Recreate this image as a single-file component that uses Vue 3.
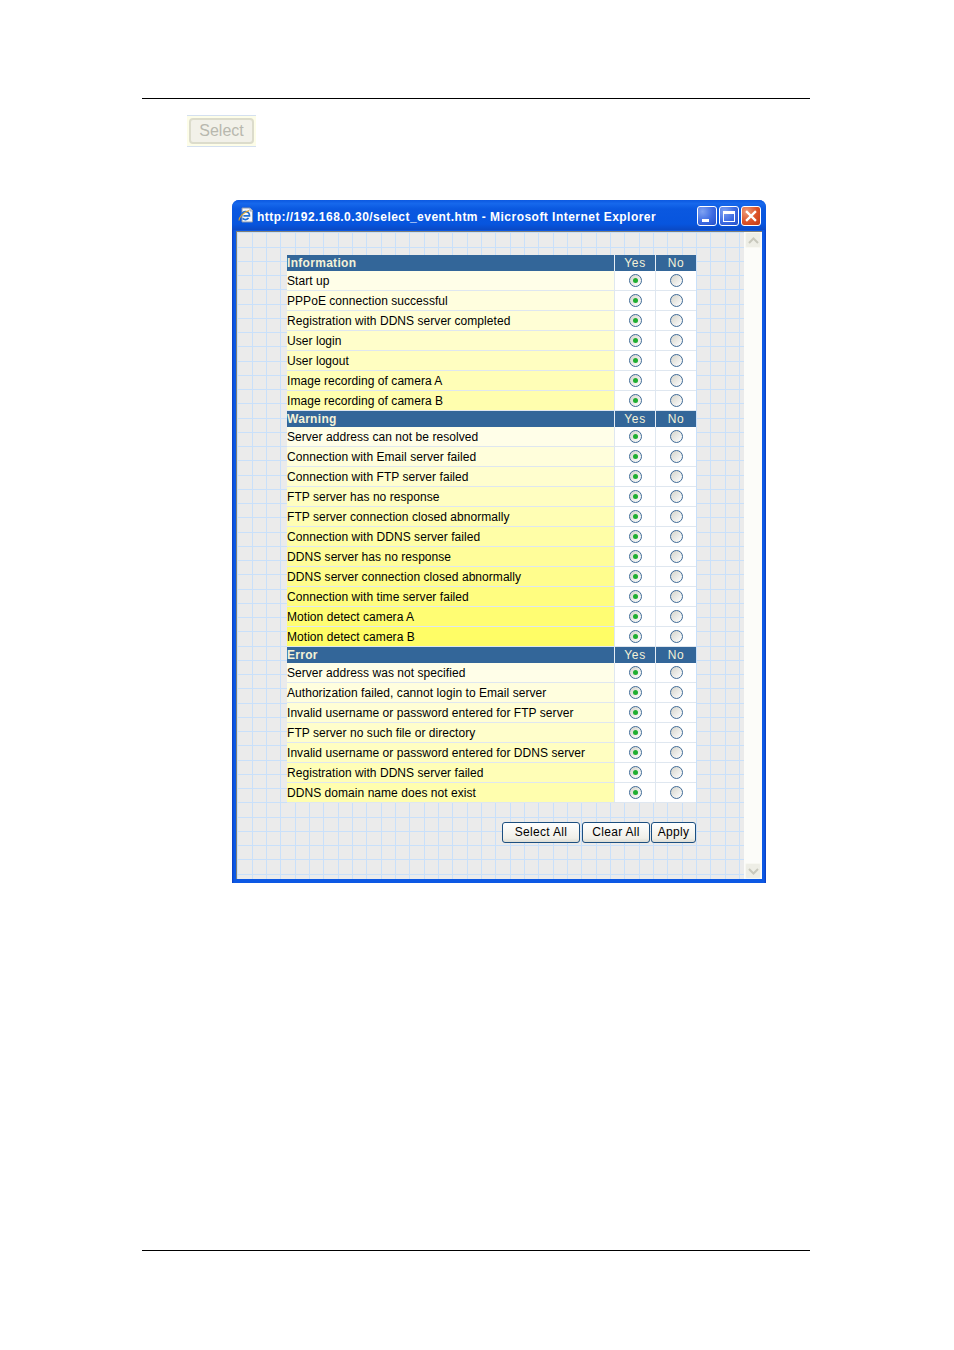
<script setup>
const sections = [
  { title: 'Information', rows: ['Start up', 'PPPoE connection successful', 'Registration with DDNS server completed', 'User login', 'User logout', 'Image recording of camera A', 'Image recording of camera B'] },
  { title: 'Warning', rows: ['Server address can not be resolved', 'Connection with Email server failed', 'Connection with FTP server failed', 'FTP server has no response', 'FTP server connection closed abnormally', 'Connection with DDNS server failed', 'DDNS server has no response', 'DDNS server connection closed abnormally', 'Connection with time server failed', 'Motion detect camera A', 'Motion detect camera B'] },
  { title: 'Error', rows: ['Server address was not specified', 'Authorization failed, cannot login to Email server', 'Invalid username or password entered for FTP server', 'FTP server no such file or directory', 'Invalid username or password entered for DDNS server', 'Registration with DDNS server failed', 'DDNS domain name does not exist'] }
]
function shade(i) {
  const t = Math.min(i / 10, 1)
  const b = Math.round(232 - t * 130)
  return { background: `rgb(255,${Math.round(254 - t)},${b})` }
}
</script>

<template>
  <div class="page">
    <hr class="rule" />
    <div class="select-wrap"><button class="select-btn" disabled>Select</button></div>

    <div class="window">
      <div class="titlebar">
        <svg class="ie" viewBox="0 0 16 16" width="16" height="16">
          <path d="M4 1h8l2.5 2.5V15H4z" fill="#f6f8fb" stroke="#8a97ad" stroke-width="1" />
          <path d="M12 1v3h2.5" fill="#dfe5ee" stroke="#8a97ad" stroke-width="0.8" />
          <path d="M3.6 9.4a4 4 0 1 1 7.9 -.6H5.4M10.6 11A4 4 0 0 1 4.6 11.4" fill="none" stroke="#2170d4" stroke-width="1.7" />
          <path d="M1 13.5C1 10.5 5.5 5 11 3.6" fill="none" stroke="#d9a22e" stroke-width="1.1" />
        </svg>
        <span class="title-text">http://192.168.0.30/select_event.htm - Microsoft Internet Explorer</span>
        <div class="controls">
          <span class="ctl"><i class="min"></i></span>
          <span class="ctl"><i class="max"></i></span>
          <span class="ctl close">
            <svg viewBox="0 0 11 11" width="12" height="12"><path d="M1 1l9 9M10 1l-9 9" stroke="#fff" stroke-width="2.1" /></svg>
          </span>
        </div>
      </div>

      <div class="client">
        <div class="content">
          <div class="events">
            <template v-for="s in sections" :key="s.title">
              <div class="row head">
                <div class="cell label">{{ s.title }}</div>
                <div class="cell choice">Yes</div>
                <div class="cell choice">No</div>
              </div>
              <div v-for="(r, i) in s.rows" :key="r" class="row">
                <div class="cell label" :style="shade(s.rows.length === 7 ? i * 0.75 : i)">{{ r }}</div>
                <div class="cell choice"><span class="radio on"></span></div>
                <div class="cell choice"><span class="radio"></span></div>
              </div>
            </template>
          </div>
          <div class="actions">
            <button class="btn b1">Select All</button>
            <button class="btn b2">Clear All</button>
            <button class="btn b3">Apply</button>
          </div>
        </div>
        <div class="scrollbar">
          <span class="arrow">
            <svg viewBox="0 0 11 7" width="11" height="7"><path d="M1 6l4.5-4.5L10 6" fill="none" stroke="#c8c8bc" stroke-width="2" /></svg>
          </span>
          <span class="arrow">
            <svg viewBox="0 0 11 7" width="11" height="7"><path d="M1 1l4.5 4.5L10 1" fill="none" stroke="#c8c8bc" stroke-width="2" /></svg>
          </span>
        </div>
      </div>
    </div>

    <hr class="rule bottom" />
  </div>
</template>

<style>
html, body { margin: 0; background: #fff; }
</style>

<style scoped>
.page {
  width: 954px;
  height: 1350px;
  box-sizing: border-box;
  padding-top: 98px;
  font-family: "Liberation Sans", Arial, sans-serif;
  overflow: hidden;
}
.rule {
  width: 668px;
  height: 1px;
  margin: 0 0 0 142px;
  border: 0;
  background: #000;
}
.rule.bottom { margin-top: 367px; }
.select-wrap {
  width: 69px;
  height: 32px;
  margin: 16px 0 0 187px;
  box-sizing: border-box;
  padding: 2px;
  background: #fdfde8;
  border-top: 1px solid #d4e0f0;
  border-bottom: 1px solid #d4e0f0;
  display: flex;
}
.select-btn {
  flex: 1;
  padding: 0;
  font: 16px "Liberation Sans", Arial, sans-serif;
  color: #b8b8ae;
  background: #f2f1e9;
  border: 2px solid #dcdccc;
  border-radius: 4px;
}
.window {
  width: 534px;
  height: 683px;
  box-sizing: border-box;
  margin: 53px 0 0 232px;
  background: linear-gradient(90deg, #0a3cc0, #0c58e4 2px, #0c58e4 calc(100% - 2px), #0a3cc0);
  border-radius: 7px 7px 0 0;
  padding: 0 4px 4px 4px;
  display: flex;
  flex-direction: column;
}
.titlebar {
  height: 30px;
  flex: none;
  display: flex;
  align-items: center;
  margin: 0 -4px;
  padding: 0 5px 0 6px;
  border-radius: 7px 7px 0 0;
  background: linear-gradient(#0c58e0 0, #1668ec 12%, #0a58e0 30%, #0755de 80%, #0a49c4 100%);
}
.ie { flex: none; margin-right: 3px; }
.title-text {
  flex: 1;
  color: #fff;
  font-size: 12px;
  font-weight: 700;
  letter-spacing: 0.47px;
  white-space: nowrap;
  padding-top: 3px;
}
.controls { display: flex; gap: 2px; margin-top: 2px; }
.ctl {
  width: 20px;
  height: 20px;
  box-sizing: border-box;
  border: 1px solid #fff;
  border-radius: 3px;
  background: radial-gradient(circle at 25% 25%, #7fa2f2, #3c6ae2 55%, #2450c8);
  position: relative;
  display: flex;
  align-items: center;
  justify-content: center;
}
.ctl.close { background: radial-gradient(circle at 25% 25%, #ee9a78, #dc5228 55%, #c23a14); }
.min {
  position: absolute;
  left: 4px;
  bottom: 3px;
  width: 7px;
  height: 3px;
  background: #fff;
}
.max {
  width: 12px;
  height: 11px;
  box-sizing: border-box;
  border: 1px solid #fff;
  border-top-width: 3px;
}
.client {
  flex: 1;
  display: flex;
  min-height: 0;
  margin-top: 1px;
  border-top: 1px solid #808078;
  border-left: 1px solid #808078;
}
.content {
  width: 507px;
  flex: none;
  box-sizing: border-box;
  padding: 23px 0 0 49px;
  background-color: #ebebeb;
  background-image:
    linear-gradient(#c9e0fa 0 1px, transparent 1px 15px, #c9e0fa 15px 16px, transparent 16px 29px, #c9e0fa 29px 30px, transparent 30px 43px, #c9e0fa 43px 44px, transparent 44px),
    linear-gradient(90deg, #c9e0fa 0 1px, transparent 1px 15px, #c9e0fa 15px 16px, transparent 16px 29px, #c9e0fa 29px 30px, transparent 30px);
  background-size: 57px 57px, 43px 43px;
}
.events {
  width: 409px;
  background: #fff;
}
.row {
  display: grid;
  grid-template-columns: 328px 41px 40px;
  height: 20px;
}
.row.head { height: 16px; }
.cell {
  box-sizing: border-box;
  font-size: 12px;
  color: #000;
  letter-spacing: 0.05px;
  white-space: nowrap;
  border-bottom: 1px solid #dfe7f0;
  border-right: 1px solid #dfe7f0;
  display: flex;
  align-items: center;
}
.choice { justify-content: center; background: #fff; }
.head .cell {
  background: #336699;
  color: #f4f2d8;
  border-bottom: 0;
  border-right: 1px solid #e6eef6;
  height: 16px;
}
.head .choice { letter-spacing: 0.7px; font-weight: 400; }
.head .label { font-weight: 700; letter-spacing: 0.3px; }
.row .cell:last-child { border-right: 0; }
.radio {
  width: 13px;
  height: 13px;
  box-sizing: border-box;
  border: 1.5px solid #3f6a96;
  border-radius: 50%;
  background: linear-gradient(135deg, #d4d4cc, #fff);
  display: flex;
  align-items: center;
  justify-content: center;
}
.radio.on::after {
  content: "";
  width: 5px;
  height: 5px;
  border-radius: 50%;
  background: #1fae30;
}
.actions {
  width: 409px;
  display: flex;
  justify-content: flex-end;
  gap: 2px;
  margin-top: 19px;
}
.btn {
  height: 21px;
  padding: 0 0 2px;
  font: 12px "Liberation Sans", Arial, sans-serif;
  letter-spacing: 0.3px;
  color: #000;
  background: linear-gradient(#fff, #f0efe8 80%, #dcdcd4);
  border: 1px solid #1c4f80;
  border-radius: 3px;
}
.b1 { width: 78px; }
.b2 { width: 68px; }
.b3 { width: 45px; margin-left: -1px; }
.scrollbar {
  flex: 1;
  padding: 0;
  display: flex;
  flex-direction: column;
  justify-content: space-between;
  align-items: center;
  background: #fcfcf9;
}
.arrow {
  width: 16px;
  height: 16px;
  box-sizing: border-box;
  background: #eeeee6;
  border: 1px solid #f8f8f2;
  border-radius: 2px;
  display: flex;
  align-items: center;
  justify-content: center;
}
.content { padding-left: 50px; }
</style>
